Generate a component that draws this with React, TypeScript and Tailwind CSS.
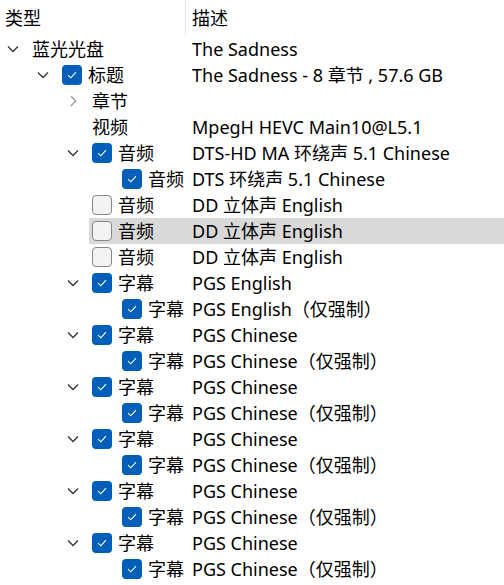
import React from "react";

type Row = {
  depth: 0 | 1 | 2 | 3;
  chevron?: "down" | "right";
  check?: "on" | "off";
  label: string;
  desc: string;
  selected?: boolean;
};

const rows: Row[] = [
  { depth: 0, chevron: "down", label: "蓝光光盘", desc: "The Sadness" },
  { depth: 1, chevron: "down", check: "on", label: "标题", desc: "The Sadness - 8 章节 , 57.6 GB" },
  { depth: 2, chevron: "right", label: "章节", desc: "" },
  { depth: 2, label: "视频", desc: "MpegH HEVC Main10@L5.1" },
  { depth: 2, chevron: "down", check: "on", label: "音频", desc: "DTS-HD MA 环绕声 5.1 Chinese" },
  { depth: 3, check: "on", label: "音频", desc: "DTS 环绕声 5.1 Chinese" },
  { depth: 2, check: "off", label: "音频", desc: "DD 立体声 English" },
  { depth: 2, check: "off", label: "音频", desc: "DD 立体声 English", selected: true },
  { depth: 2, check: "off", label: "音频", desc: "DD 立体声 English" },
  { depth: 2, chevron: "down", check: "on", label: "字幕", desc: "PGS English" },
  { depth: 3, check: "on", label: "字幕", desc: "PGS English（仅强制）" },
  ...Array.from({ length: 5 }).flatMap(() => [
    { depth: 2, chevron: "down", check: "on", label: "字幕", desc: "PGS Chinese" } as Row,
    { depth: 3, check: "on", label: "字幕", desc: "PGS Chinese（仅强制）" } as Row,
  ]),
];

const slotW = ["w-[29px]", "w-[59px]", "w-[89px]", "w-[119px]"];
const slotPad = ["pl-[7px]", "pl-[37px]", "pl-[67px]", "pl-[97px]"];
const labelW = ["w-[157px]", "w-[127px]", "w-[97px]", "w-[67px]"];

function Chevron({ dir }: { dir: "down" | "right" }) {
  if (dir === "down") {
    return (
      <svg width="12" height="8" viewBox="0 0 12 8" className="block">
        <path d="M1 1.5 L6 6.5 L11 1.5" fill="none" stroke="#333" strokeWidth="1.3" />
      </svg>
    );
  }
  return (
    <svg width="12" height="12" viewBox="0 0 12 12" className="block">
      <path d="M4 1 L8.5 6 L4 11" fill="none" stroke="#9a9a9a" strokeWidth="1.3" />
    </svg>
  );
}

function Check({ on }: { on: boolean }) {
  if (on) {
    return (
      <div className="w-[20px] h-[20px] rounded-[4px] bg-[#005fb8] flex items-center justify-center shrink-0">
        <svg width="10" height="8" viewBox="0 0 10 8">
          <path d="M1 4.2 L3.8 6.8 L9 1.2" fill="none" stroke="#fff" strokeWidth="1.1" />
        </svg>
      </div>
    );
  }
  return <div className="w-[20px] h-[20px] rounded-[4px] bg-[#f3f3f3] border border-[#878787] shrink-0" />;
}

export default function App() {
  return (
    <div
      className="w-[504px] h-[585px] bg-white text-black overflow-hidden text-[18px] leading-none"
      style={{ fontFamily: '"Noto Sans", "Noto Sans CJK SC", sans-serif' }}
    >
      <div className="flex h-[36px]">
        <div className="w-[185px] flex items-center pl-[5px] pb-[1px]">类型</div>
        <div className="w-px h-[35px] bg-[#e5e5e5]" />
        <div className="flex items-center pl-[6px] pb-[1px]">描述</div>
      </div>
      {rows.map((r, i) => (
        <div key={i} className="flex h-[26px]">
          <div className={`${slotW[r.depth]} ${slotPad[r.depth]} shrink-0 flex items-center`}>
            {r.chevron && <Chevron dir={r.chevron} />}
          </div>
          <div className={`flex flex-1 items-center ${r.selected ? "bg-[#d9d9d9]" : ""}`}>
            <div className={`${labelW[r.depth]} shrink-0 flex items-center gap-[6px] pl-[3px] whitespace-nowrap`}>
              {r.check && <Check on={r.check === "on"} />}
              <span className="pb-[1px]">{r.label}</span>
            </div>
            <div className="pl-[6px] whitespace-nowrap pb-[1px]">{r.desc}</div>
          </div>
        </div>
      ))}
    </div>
  );
}
